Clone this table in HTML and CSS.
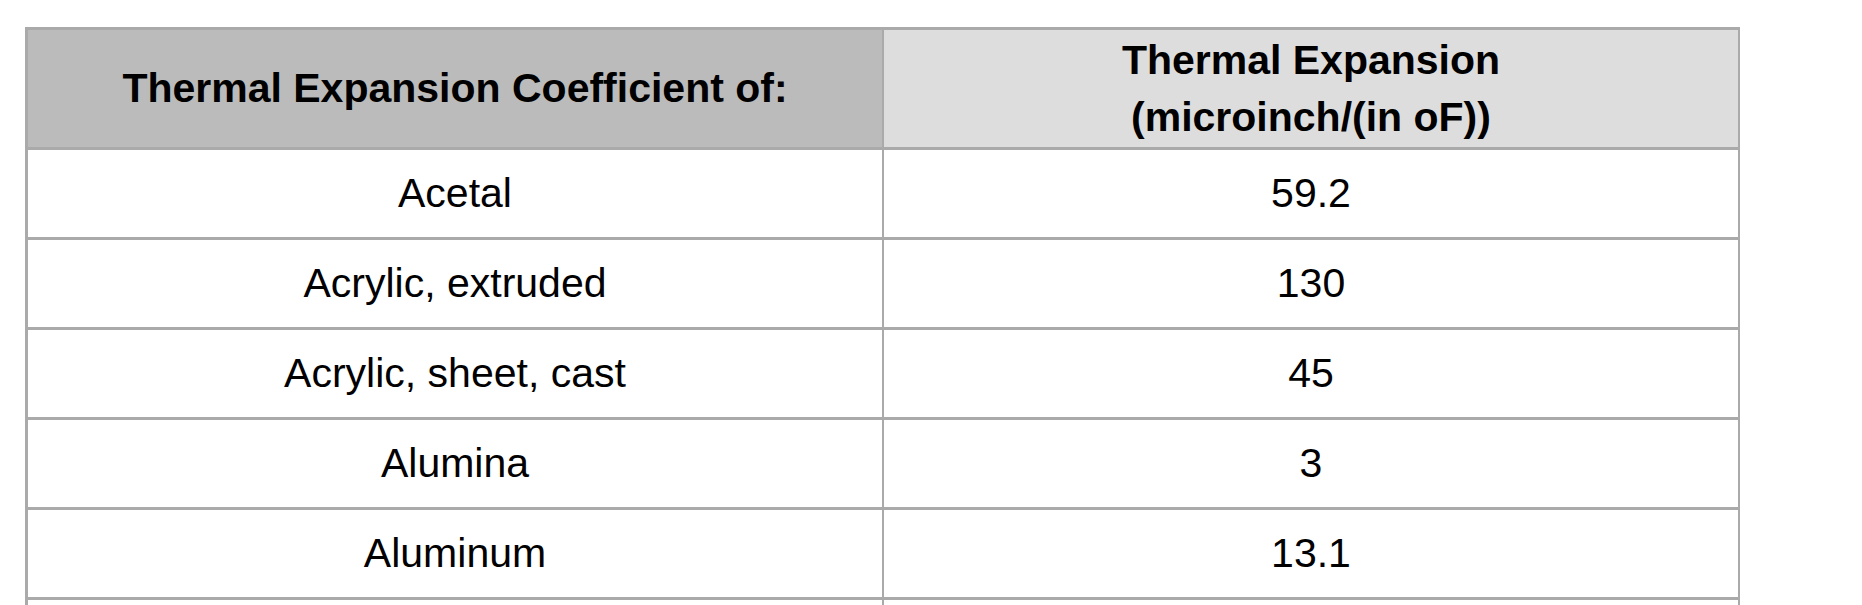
FILE: index.html
```html
<!DOCTYPE html>
<html lang="en">
<head>
<meta charset="utf-8">
<title>Thermal Expansion Coefficients</title>
<link rel="stylesheet" href="styles.css">
</head>
<body>
<div class="page">
  <table class="data">
    <thead>
      <tr>
        <th class="c1 h-dark">Thermal Expansion Coefficient of:</th>
        <th class="c2 h-light">Thermal Expansion<br>(microinch/(in oF))</th>
      </tr>
    </thead>
    <tbody>
      <tr><td class="c1">Acetal</td><td class="c2">59.2</td></tr>
      <tr><td class="c1">Acrylic, extruded</td><td class="c2">130</td></tr>
      <tr><td class="c1">Acrylic, sheet, cast</td><td class="c2">45</td></tr>
      <tr><td class="c1">Alumina</td><td class="c2">3</td></tr>
      <tr><td class="c1">Aluminum</td><td class="c2">13.1</td></tr>
      <tr><td class="c1">&nbsp;</td><td class="c2">&nbsp;</td></tr>
    </tbody>
  </table>
</div>
</body>
</html>
```
FILE: styles.css
```css
html, body {
  margin: 0;
  padding: 0;
  background: #ffffff;
}

.page {
  padding: 27px 0 0 25px;
  font-family: "Liberation Sans", Arial, sans-serif;
  color: #000000;
}

.data {
  border-collapse: separate;
  border-spacing: 0;
  table-layout: fixed;
  font-size: 41px;
  line-height: 57px;
}

.data th,
.data td {
  padding: 0;
  text-align: center;
  vertical-align: middle;
  border-bottom: 3px solid #aaaaaa;
  border-right: 2px solid #aaaaaa;
}

.data .c1 {
  width: 854px;
  border-left: 3px solid #aaaaaa;
}

.data .c2 {
  width: 854px;
}

.data th {
  height: 117px;
  font-weight: bold;
  border-top: 3px solid #aaaaaa;
}

.data td {
  height: 87px;
  font-weight: normal;
}

.h-dark {
  background: #bbbbbb;
}

.h-light {
  background: #dddddd;
}
```
